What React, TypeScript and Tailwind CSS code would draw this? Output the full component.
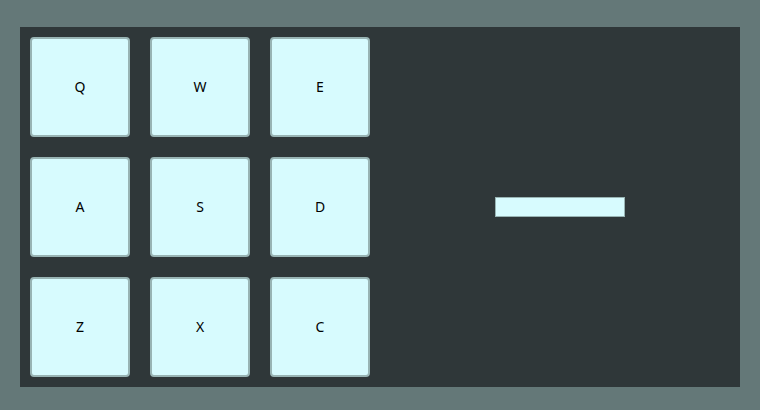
import React from "react";

const keys = ["Q", "W", "E", "A", "S", "D", "Z", "X", "C"];

const App: React.FC = () => {
  return (
    <div className="w-[760px] h-[410px] bg-[#647878] px-5 pt-[27px] font-['Noto_Sans',sans-serif]">
      <div className="flex h-[360px] w-[720px] gap-5 bg-[#2f3739] p-[10px]">
        {/* Key pad */}
        <div className="grid grid-cols-3 gap-5">
          {keys.map((k) => (
            <button
              key={k}
              className="flex h-[100px] w-[100px] items-center justify-center rounded-[4px] border-2 border-[#98b4b4] bg-[#d7fbfe] text-sm text-black"
            >
              {k}
            </button>
          ))}
        </div>

        {/* Display */}
        <div className="flex flex-1 items-center justify-center">
          <div className="h-5 w-[130px] border border-[#98b4b4] bg-[#d7fbfe]" />
        </div>
      </div>
    </div>
  );
};

export default App;
